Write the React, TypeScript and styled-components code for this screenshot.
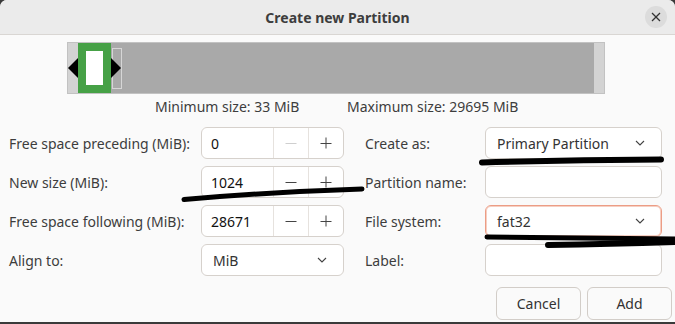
import React from 'react';
import styled, { createGlobalStyle } from 'styled-components';

const GlobalStyle = createGlobalStyle`
  html, body {
    margin: 0;
    padding: 0;
    background: #3a3a3a;
  }
  #root {
    width: 675px;
    height: 324px;
  }
  * {
    box-sizing: border-box;
  }
`;

const Dialog = styled.div`
  position: relative;
  width: 675px;
  height: 322px;
  background: #fafafa;
  border-radius: 7px 7px 0 0;
  overflow: hidden;
  display: flex;
  flex-direction: column;
  font-family: 'Noto Sans', 'Open Sans', sans-serif;
  font-size: 14px;
  color: #3d3d3d;
`;

const HeaderBar = styled.div`
  height: 35px;
  flex-shrink: 0;
  background: #ebebeb;
  border-bottom: 1px solid #d9d6d3;
  display: grid;
  grid-template-columns: 1fr auto 1fr;
  align-items: center;
`;

const Title = styled.div`
  grid-column: 2;
  font-weight: 700;
  font-size: 14px;
  color: #3d3d3d;
`;

const CloseButton = styled.button`
  grid-column: 3;
  justify-self: end;
  margin-right: 8px;
  width: 22px;
  height: 22px;
  padding: 0;
  border: none;
  border-radius: 50%;
  background: #dcdcdc;
  display: flex;
  align-items: center;
  justify-content: center;
`;

const Body = styled.div`
  display: flex;
  flex-direction: column;
  padding-top: 7px;
`;

const BarWrap = styled.div`
  margin-left: 67px;
  width: 538px;
  height: 52px;
`;

const SizeInfo = styled.div`
  margin-top: 4px;
  padding-left: 155px;
  display: grid;
  grid-template-columns: 192px auto;
  line-height: 17px;
  color: #3d3d3d;
`;

const Form = styled.div`
  margin-top: 12px;
  padding-left: 9px;
  display: grid;
  grid-template-columns: 192px 143px 141px 177px;
  grid-auto-rows: 32px;
  row-gap: 7px;
`;

const Label = styled.div<{ $right?: boolean }>`
  display: flex;
  align-items: center;
  padding-left: ${(p) => (p.$right ? '21px' : '0')};
  color: #3d3d3d;
  white-space: nowrap;
`;

const Field = styled.div<{ $focused?: boolean }>`
  display: flex;
  align-items: center;
  height: 32px;
  background: #ffffff;
  border: 1px solid ${(p) => (p.$focused ? '#ec9d85' : '#d6d1cc')};
  box-shadow: ${(p) => (p.$focused ? 'inset 0 0 0 1px #f6cfc2' : 'none')};
  border-radius: 6px;
  overflow: hidden;
`;

const SpinValue = styled.div`
  flex: 1;
  padding-left: 9px;
  color: #111111;
`;

const SpinButton = styled.div`
  width: 35px;
  height: 100%;
  border-left: 1px solid #e6e2de;
  display: flex;
  align-items: center;
  justify-content: center;
`;

const ComboValue = styled.div`
  flex: 1;
  padding-left: 11px;
  color: #333333;
`;

const Chevron = styled.div`
  width: 26px;
  display: flex;
  align-items: center;
  justify-content: flex-start;
`;

const Actions = styled.div`
  margin-top: 11px;
  padding-right: 3px;
  display: flex;
  justify-content: flex-end;
  gap: 6px;
`;

const ActionButton = styled.button<{ $w: number }>`
  width: ${(p) => p.$w}px;
  height: 33px;
  border: 1px solid #d2cdc8;
  border-radius: 6px;
  background: #fafafa;
  font-family: inherit;
  font-size: 14px;
  color: #333333;
  padding: 0;
`;

const Marks = styled.svg`
  position: absolute;
  left: 0;
  top: 0;
  pointer-events: none;
`;

const MinusIcon = ({ disabled }: { disabled?: boolean }) => (
  <svg width="12" height="12" viewBox="0 0 12 12">
    <line x1="0.5" y1="6.5" x2="11.5" y2="6.5" stroke={disabled ? '#cfcfcf' : '#444'} strokeWidth="1" />
  </svg>
);

const PlusIcon = () => (
  <svg width="12" height="12" viewBox="0 0 12 12">
    <line x1="0.5" y1="6.5" x2="11.5" y2="6.5" stroke="#444" strokeWidth="1" />
    <line x1="6" y1="0.5" x2="6" y2="11.5" stroke="#444" strokeWidth="1" />
  </svg>
);

const ChevronIcon = () => (
  <svg width="10" height="6" viewBox="0 0 10 6">
    <polyline points="1,1 5,5 9,1" fill="none" stroke="#444" strokeWidth="1.1" />
  </svg>
);

const CloseIcon = () => (
  <svg width="10" height="10" viewBox="0 0 10 10">
    <line x1="1" y1="1" x2="9" y2="9" stroke="#333" strokeWidth="1.3" />
    <line x1="9" y1="1" x2="1" y2="9" stroke="#333" strokeWidth="1.3" />
  </svg>
);

const PartitionBar = () => (
  <svg width="538" height="52" viewBox="0 0 538 52">
    <rect x="0.5" y="0.5" width="537" height="51" fill="#d3d3d3" stroke="#c2c2c2" />
    <rect x="44" y="1" width="483" height="50" fill="#a9a9a9" />
    <rect x="11" y="1" width="33" height="50" fill="#46a146" />
    <rect x="19" y="9" width="17" height="34" fill="#ffffff" />
    <rect x="45.5" y="6.5" width="9" height="40" fill="none" stroke="#d6d6d6" />
    <polygon points="1,26 11,16 11,36" fill="#000" />
    <polygon points="44,16 54,26 44,36" fill="#000" />
  </svg>
);

const Spin = ({ value, minusDisabled }: { value: string; minusDisabled?: boolean }) => (
  <Field>
    <SpinValue>{value}</SpinValue>
    <SpinButton>
      <MinusIcon disabled={minusDisabled} />
    </SpinButton>
    <SpinButton>
      <PlusIcon />
    </SpinButton>
  </Field>
);

const Combo = ({ value, focused }: { value: string; focused?: boolean }) => (
  <Field $focused={focused}>
    <ComboValue>{value}</ComboValue>
    <Chevron>
      <ChevronIcon />
    </Chevron>
  </Field>
);

const App = () => {
  return (
    <>
      <GlobalStyle />
      <Dialog>
        <HeaderBar>
          <Title>Create new Partition</Title>
          <CloseButton>
            <CloseIcon />
          </CloseButton>
        </HeaderBar>
        <Body>
          <BarWrap>
            <PartitionBar />
          </BarWrap>
          <SizeInfo>
            <span>Minimum size: 33 MiB</span>
            <span>Maximum size: 29695 MiB</span>
          </SizeInfo>
          <Form>
            <Label>Free space preceding (MiB):</Label>
            <Spin value="0" minusDisabled />
            <Label $right>Create as:</Label>
            <Combo value="Primary Partition" />

            <Label>New size (MiB):</Label>
            <Spin value="1024" />
            <Label $right>Partition name:</Label>
            <Field />

            <Label>Free space following (MiB):</Label>
            <Spin value="28671" />
            <Label $right>File system:</Label>
            <Combo value="fat32" focused />

            <Label>Align to:</Label>
            <Combo value="MiB" />
            <Label $right>Label:</Label>
            <Field />
          </Form>
          <Actions>
            <ActionButton $w={85}>Cancel</ActionButton>
            <ActionButton $w={85}>Add</ActionButton>
          </Actions>
        </Body>
        {/* marker strokes drawn over the screenshot */}
        <Marks width="675" height="322" viewBox="0 0 675 322">
          <g fill="none" stroke="#000" strokeLinecap="round">
            <path d="M184 199.5 Q 270 192 362 189" strokeWidth="5" />
            <path d="M482 162.5 Q 570 160 661 159.5" strokeWidth="6" />
            <path d="M487 237 L 676 239" strokeWidth="5" />
            <path d="M548 245 Q 610 244 676 242" strokeWidth="6" />
          </g>
        </Marks>
      </Dialog>
    </>
  );
};

export default App;
